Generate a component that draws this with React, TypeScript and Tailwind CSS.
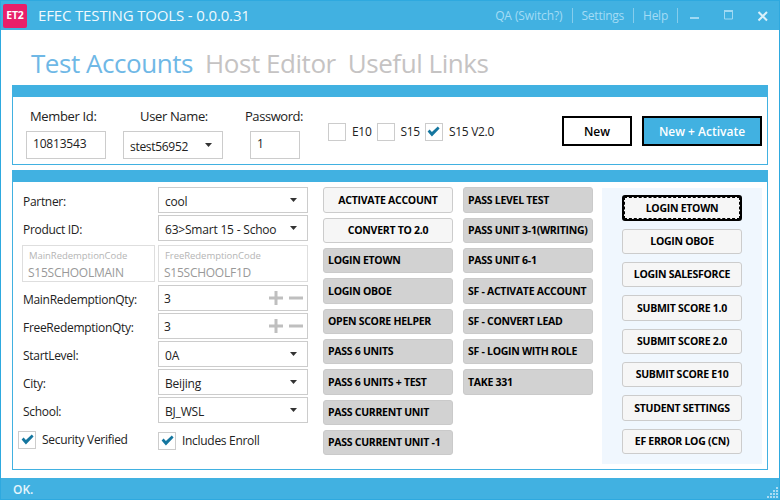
import React from "react";

const F = "font-['Open_Sans','Noto_Sans',sans-serif]";

function Caret() {
  return (
    <svg width="7" height="4" viewBox="0 0 7 4" className="shrink-0">
      <path d="M0 0H7L3.5 4Z" fill="#333333" />
    </svg>
  );
}

function Check({ checked, label, className = "" }: { checked: boolean; label?: string; className?: string }) {
  return (
    <div className={`flex items-center ${className}`}>
      <div className="flex h-[18px] w-[18px] items-center justify-center border border-[#cccccc] bg-white">
        {checked && (
          <svg width="13" height="11" viewBox="0 0 13 11">
            <path d="M0.6 5.6L2.6 3.6L4.9 6L10.8 0.4L12.6 2.4L4.9 10.4Z" fill="#14769f" />
          </svg>
        )}
      </div>
      {label && <span className="ml-[6px] pt-[1px] text-[12px] tracking-[-0.3px] text-[#222222]">{label}</span>}
    </div>
  );
}

function Select({ value, w = "w-[150px]", h = "h-[26px]", track = "tracking-[-0.2px]" }: { value: string; w?: string; h?: string; track?: string }) {
  return (
    <div className={`flex ${w} ${h} items-center justify-between overflow-hidden border border-[#cccccc] bg-white pl-[6px] pr-[10px] text-[12px] ${track} text-[#222222]`}>
      <span className="whitespace-nowrap pt-[3px]">{value}</span>
      <Caret />
    </div>
  );
}

function Qty({ value }: { value: string }) {
  return (
    <div className="flex h-[26px] w-[150px] items-center justify-between border border-[#cccccc] bg-white pl-[5px] pr-[4px] text-[12px] text-[#222222]">
      <span className="pt-[1px]">{value}</span>
      <svg width="35" height="14" viewBox="0 0 35 14">
        <path d="M1 5.5H15V8.5H1ZM6.5 0H9.5V14H6.5ZM21 5.5H35V8.5H21Z" fill="#bfbfbf" />
      </svg>
    </div>
  );
}

function Row({ label, children, className = "" }: { label: string; children: React.ReactNode; className?: string }) {
  return (
    <div className={`flex items-center ${className}`}>
      <div className="w-[140px] pl-[5px] pt-[4px] text-[12px] tracking-[-0.3px] text-[#222222]">{label}</div>
      {children}
    </div>
  );
}

function Code({ label, value, w }: { label: string; value: string; w: string }) {
  return (
    <div className={`flex h-[37px] ${w} flex-col border border-[#dedede] bg-white pl-[5px] pt-[3px]`}>
      <span className="pl-[1px] text-[9.5px] leading-[14px] tracking-[-0.05px] text-[#b5b5b5]">{label}</span>
      <span className="pt-[1px] text-[12px] leading-[17px] tracking-[-0.25px] text-[#999999]">{value}</span>
    </div>
  );
}

function GrayBtn({ label, h }: { label: string; h: string }) {
  return (
    <div className={`flex ${h} w-[130px] items-center whitespace-nowrap rounded-[3px] border border-[#cacaca] bg-[#d2d2d2] pl-[4px] pt-[1px] text-[10.5px] font-bold tracking-[-0.28px] text-black`}>
      {label}
    </div>
  );
}

function LightBtn({ label, h, w = "w-[130px]" }: { label: string; h: string; w?: string }) {
  return (
    <div className={`flex ${h} ${w} items-center justify-center whitespace-nowrap rounded-[3px] border border-[#cccccc] bg-[#f6f6f6] pt-[1px] text-[10.5px] font-bold tracking-[-0.28px] text-black`}>
      {label}
    </div>
  );
}

export default function App() {
  return (
    <div className={`flex h-[500px] w-[780px] flex-col overflow-hidden border-x border-b border-[#2ea9df] bg-white ${F}`}>
      {/* Title bar */}
      <div className="-mx-px flex h-[30px] shrink-0 items-center border-t border-[#2ea9df] bg-[#41b1e1] pl-[3px] text-white">
        <div className="flex h-[24px] w-[24px] items-center justify-center rounded-[2px] bg-[#e8206a] text-[10.5px] font-bold tracking-[-0.2px]">ET2</div>
        <div className="ml-[11px] whitespace-nowrap text-[15px] tracking-[-0.15px] text-[#f0f9fd]">EFEC TESTING TOOLS - 0.0.0.31</div>
        <div className="ml-auto flex items-center text-[12px] tracking-[-0.25px] text-[#a3dcf5]">
          <span className="tracking-[-0.1px]">QA (Switch?)</span>
          <div className="mx-[9px] h-[15px] w-px bg-[#86cdec]" />
          <span>Settings</span>
          <div className="mx-[9px] h-[15px] w-px bg-[#86cdec]" />
          <span>Help</span>
          <div className="mx-[9px] h-[15px] w-px bg-[#86cdec]" />
        </div>
        <svg width="93" height="30" viewBox="0 0 93 30" className="shrink-0">
          <rect x="3" y="16" width="9" height="2" fill="#9fd9f3" />
          <path d="M37.5 9.5H45.5V18H37.5Z" fill="none" stroke="#9fd9f3" />
          <rect x="37" y="9" width="9" height="2" fill="#9fd9f3" />
          <path d="M71.5 11L80 19.5M80 11L71.5 19.5" stroke="#d9f0fa" strokeWidth="2" />
        </svg>
      </div>

      {/* Tabs */}
      <div className="flex h-[55px] shrink-0 items-center gap-[12px] pl-[30px] pt-[12px] text-[26px] tracking-[-0.45px] text-[#c5c3c3]">
        <span className="text-[#6fb8e6]">Test Accounts</span>
        <span>Host Editor</span>
        <span>Useful Links</span>
      </div>

      {/* Top panel */}
      <div className="mx-[11px] flex h-[80px] shrink-0 flex-col border border-[#41b1e1]">
        <div className="-mx-px -mt-px h-[12px] shrink-0 bg-[#41b1e1]" />
        <div className="flex flex-1 items-start pl-[13px] pr-[5px]">
          <div className="ml-0 w-[80px] pt-[10px]">
            <div className="h-[24px] whitespace-nowrap pl-[4px] text-[13px] tracking-[-0.35px] text-[#222222]">Member Id:</div>
            <div className="flex h-[28px] items-center border border-[#cccccc] pb-[2px] pl-[6px] text-[12px] tracking-[-0.2px] text-[#222222]">10813543</div>
          </div>
          <div className="ml-[17px] w-[100px] pt-[10px]">
            <div className="h-[24px] whitespace-nowrap pl-[17px] text-[13px] tracking-[-0.35px] text-[#222222]">User Name:</div>
            <Select value="stest56952" w="w-[100px]" h="h-[28px]" track="tracking-[-0.3px]" />
          </div>
          <div className="ml-[22px] w-[57px] pt-[10px]">
            <div className="h-[24px] whitespace-nowrap text-[13px] tracking-[-0.45px] text-[#222222]">Password:</div>
            <div className="ml-[5px] flex h-[28px] w-[50px] items-center border border-[#cccccc] pb-[2px] pl-[6px] text-[12px] text-[#222222]">1</div>
          </div>
          <div className="ml-[26px] mt-[25px] flex items-center">
            <Check checked={false} label="E10" />
            <Check checked={false} label="S15" className="ml-[5px]" />
            <Check checked label="S15 V2.0" className="ml-[5px]" />
          </div>
          <div className="ml-auto mt-[19px] flex gap-[10px]">
            <div className="flex h-[30px] w-[70px] items-center justify-center border-2 border-black bg-white pt-[1px] text-[12px] font-semibold text-black">New</div>
            <div className="flex h-[30px] w-[120px] items-center justify-center border-2 border-black bg-[#41b1e1] pt-[1px] text-[12px] font-semibold text-white">New + Activate</div>
          </div>
        </div>
      </div>

      {/* Main panel */}
      <div className="mx-[11px] mt-[5px] flex h-[300px] shrink-0 flex-col border border-[#41b1e1]">
        <div className="-mx-px -mt-px h-[12px] shrink-0 bg-[#41b1e1]" />
        <div className="flex flex-1 items-start pl-[5px]">
          {/* Form */}
          <div className="mt-[5px] flex w-[290px] flex-col">
            <Row label="Partner:"><Select value="cool" /></Row>
            <Row label="Product ID:" className="mt-[2px]"><Select value="63>Smart 15 - Schoo" /></Row>
            <div className="mt-[4px] flex pl-[4px]">
              <Code label="MainRedemptionCode" value="S15SCHOOLMAIN" w="w-[133px]" />
              <div className="ml-[3px]"><Code label="FreeRedemptionCode" value="S15SCHOOLF1D" w="w-[150px]" /></div>
            </div>
            <Row label="MainRedemptionQty:" className="mt-[3px]"><Qty value="3" /></Row>
            <Row label="FreeRedemptionQty:" className="mt-[2px]"><Qty value="3" /></Row>
            <Row label="StartLevel:" className="mt-[2px]"><Select value="0A" /></Row>
            <Row label="City:" className="mt-[2px]"><Select value="Beijing" /></Row>
            <Row label="School:" className="mt-[2px]"><Select value="BJ_WSL" /></Row>
            <div className="mt-[7px] flex items-start">
              <Check checked label="Security Verified" className="w-[140px]" />
              <Check checked label="Includes Enroll" className="mt-[1px]" />
            </div>
          </div>

          {/* Middle buttons */}
          <div className="ml-[15px] mt-[5px] flex flex-col gap-[5px]">
            <LightBtn label="ACTIVATE ACCOUNT" h="h-[26px]" />
            <LightBtn label="CONVERT TO 2.0" h="h-[25px]" />
            <GrayBtn label="LOGIN ETOWN" h="h-[25px]" />
            <GrayBtn label="LOGIN OBOE" h="h-[26px]" />
            <GrayBtn label="OPEN SCORE HELPER" h="h-[25px]" />
            <GrayBtn label="PASS 6 UNITS" h="h-[25px]" />
            <GrayBtn label="PASS 6 UNITS + TEST" h="h-[26px]" />
            <GrayBtn label="PASS CURRENT UNIT" h="h-[25px]" />
            <GrayBtn label="PASS CURRENT UNIT -1" h="h-[25px]" />
          </div>
          <div className="ml-[10px] mt-[5px] flex flex-col gap-[5px]">
            <GrayBtn label="PASS LEVEL TEST" h="h-[26px]" />
            <GrayBtn label="PASS UNIT 3-1(WRITING)" h="h-[25px]" />
            <GrayBtn label="PASS UNIT 6-1" h="h-[25px]" />
            <GrayBtn label="SF - ACTIVATE ACCOUNT" h="h-[26px]" />
            <GrayBtn label="SF - CONVERT LEAD" h="h-[25px]" />
            <GrayBtn label="SF - LOGIN WITH ROLE" h="h-[25px]" />
            <GrayBtn label="TAKE 331" h="h-[26px]" />
          </div>

          {/* Right panel */}
          <div className="ml-[9px] mt-[6px] flex h-[276px] w-[160px] flex-col items-center gap-[8px] bg-[#f0f7fe] pt-[7px]">
            <div className="flex h-[26px] w-[120px] items-center justify-center whitespace-nowrap rounded-[3px] border-2 border-black bg-[#f6f6f6] pt-[1px] text-[10.5px] font-bold tracking-[-0.28px] text-black outline-1 outline-offset-[-3px] outline-dashed outline-black">LOGIN ETOWN</div>
            <LightBtn label="LOGIN OBOE" h="h-[25px]" w="w-[120px]" />
            <LightBtn label="LOGIN SALESFORCE" h="h-[25px]" w="w-[120px]" />
            <LightBtn label="SUBMIT SCORE 1.0" h="h-[26px]" w="w-[120px]" />
            <LightBtn label="SUBMIT SCORE 2.0" h="h-[25px]" w="w-[120px]" />
            <LightBtn label="SUBMIT SCORE E10" h="h-[25px]" w="w-[120px]" />
            <LightBtn label="STUDENT SETTINGS" h="h-[26px]" w="w-[120px]" />
            <LightBtn label="EF ERROR LOG (CN)" h="h-[25px]" w="w-[120px]" />
          </div>
        </div>
      </div>

      {/* Status bar */}
      <div className="-mx-px mt-auto flex h-[21px] shrink-0 items-center justify-between bg-[#41b1e1] pl-[13px] pt-[2px] text-[12px] font-semibold text-[#e6f5fc]">
        <span>OK.</span>
        <svg width="12" height="12" viewBox="0 0 12 12" className="mt-[5px] mr-[1px]">
          <path d="M9 1h2v2H9zM6 4h2v2H6zM9 4h2v2H9zM3 7h2v2H3zM6 7h2v2H6zM9 7h2v2H9zM0 10h2v2H0zM3 10h2v2H3zM6 10h2v2H6zM9 10h2v2H9z" fill="#a9dcf3" />
        </svg>
      </div>
    </div>
  );
}
